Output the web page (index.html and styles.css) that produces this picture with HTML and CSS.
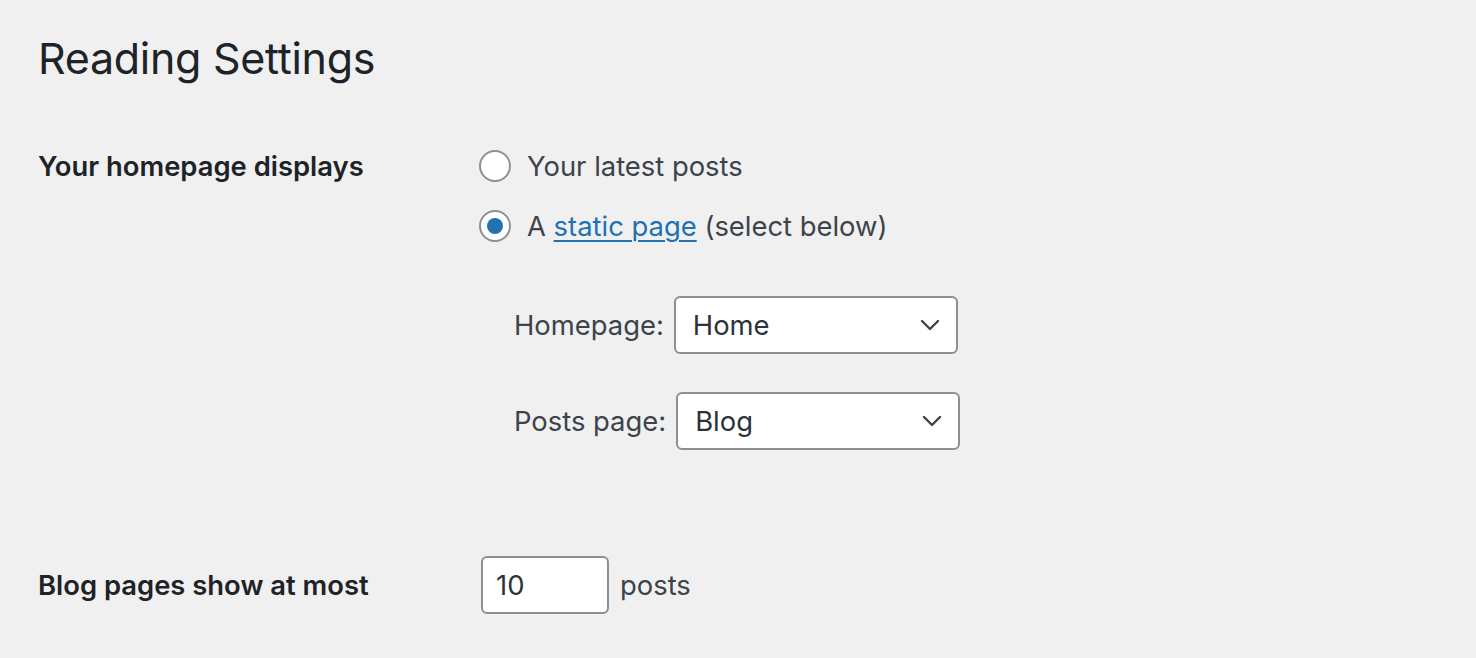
FILE: index.html
```html
<!DOCTYPE html>
<html>
<head>
<meta charset="utf-8">
<link rel="stylesheet" href="styles.css">
</head>
<body>
<div class="wrap">
  <h1 class="title">Reading Settings</h1>
  <div class="row row-home">
    <div class="th">Your homepage displays</div>
    <div class="td">
      <div class="radio-line">
        <span class="radio"></span>
        <span>Your latest posts</span>
      </div>
      <div class="radio-line">
        <span class="radio checked"></span>
        <span>A <a class="link" href="#">static page</a> (select below)</span>
      </div>
      <div class="sub">
        <div class="sel-line">
          <span>Homepage:</span>
          <div class="select"><span>Home</span>
            <svg class="chev" viewBox="0 0 20 12" width="20" height="12"><path d="M2 2l8 8 8-8" fill="none" stroke="#3c434a" stroke-width="2.4" stroke-linecap="round" stroke-linejoin="round"/></svg>
          </div>
        </div>
        <div class="sel-line">
          <span>Posts page:</span>
          <div class="select"><span>Blog</span>
            <svg class="chev" viewBox="0 0 20 12" width="20" height="12"><path d="M2 2l8 8 8-8" fill="none" stroke="#3c434a" stroke-width="2.4" stroke-linecap="round" stroke-linejoin="round"/></svg>
          </div>
        </div>
      </div>
    </div>
  </div>
  <div class="row row-blog">
    <div class="th">Blog pages show at most</div>
    <div class="td inline">
      <div class="num">10</div>
      <span>posts</span>
    </div>
  </div>
</div>
</body>
</html>
```

FILE: styles.css
```css
html, body {
  margin: 0;
  padding: 0;
  background: #f0f0f1;
}
body {
  font-family: Inter, "Noto Sans", "Liberation Sans", sans-serif;
  color: #3c434a;
  font-size: 27.4px;
}
.wrap {
  padding: 32px 0 0 38px;
}
.title {
  margin: 0;
  font-size: 43px;
  font-weight: 400;
  line-height: 52px;
  color: #1d2327;
  letter-spacing: -0.3px;
}
.row {
  display: flex;
}
.row-home {
  margin-top: 65px;
}
.th {
  width: 441px;
  flex: none;
  font-weight: 600;
  color: #1d2327;
  line-height: 34px;
}
.td {
  display: flex;
  flex-direction: column;
}
.radio-line {
  display: flex;
  align-items: center;
  gap: 16px;
  height: 34px;
  margin-bottom: 26px;
}
.radio {
  width: 28px;
  height: 28px;
  border: 2px solid #8c8f94;
  border-radius: 50%;
  background: #fff;
  box-sizing: content-box;
  display: flex;
  align-items: center;
  justify-content: center;
}
.radio.checked::after {
  content: "";
  width: 16px;
  height: 16px;
  border-radius: 50%;
  background: #2271b1;
}
.link {
  color: #2271b1;
  text-decoration: underline;
  text-decoration-thickness: 2px;
  text-underline-offset: 4px;
}
.sub {
  padding-left: 35px;
  padding-top: 27px;
  display: flex;
  flex-direction: column;
  gap: 38px;
}
.sel-line {
  display: flex;
  align-items: center;
  gap: 10px;
}
.select {
  width: 284px;
  height: 58px;
  box-sizing: border-box;
  border: 2px solid #8c8f94;
  border-radius: 6px;
  background: #fff;
  display: flex;
  align-items: center;
  justify-content: space-between;
  padding: 0 16px 0 17px;
  color: #2c3338;
}
.chev {
  display: block;
}
.row-blog {
  margin-top: 106px;
  align-items: center;
}
.inline {
  flex-direction: row;
  align-items: center;
  gap: 11px;
}
.num {
  width: 128px;
  height: 58px;
  box-sizing: border-box;
  margin-left: 2px;
  border: 2px solid #8c8f94;
  border-radius: 6px;
  background: #fff;
  padding-left: 13px;
  display: flex;
  align-items: center;
  color: #2c3338;
}
```
